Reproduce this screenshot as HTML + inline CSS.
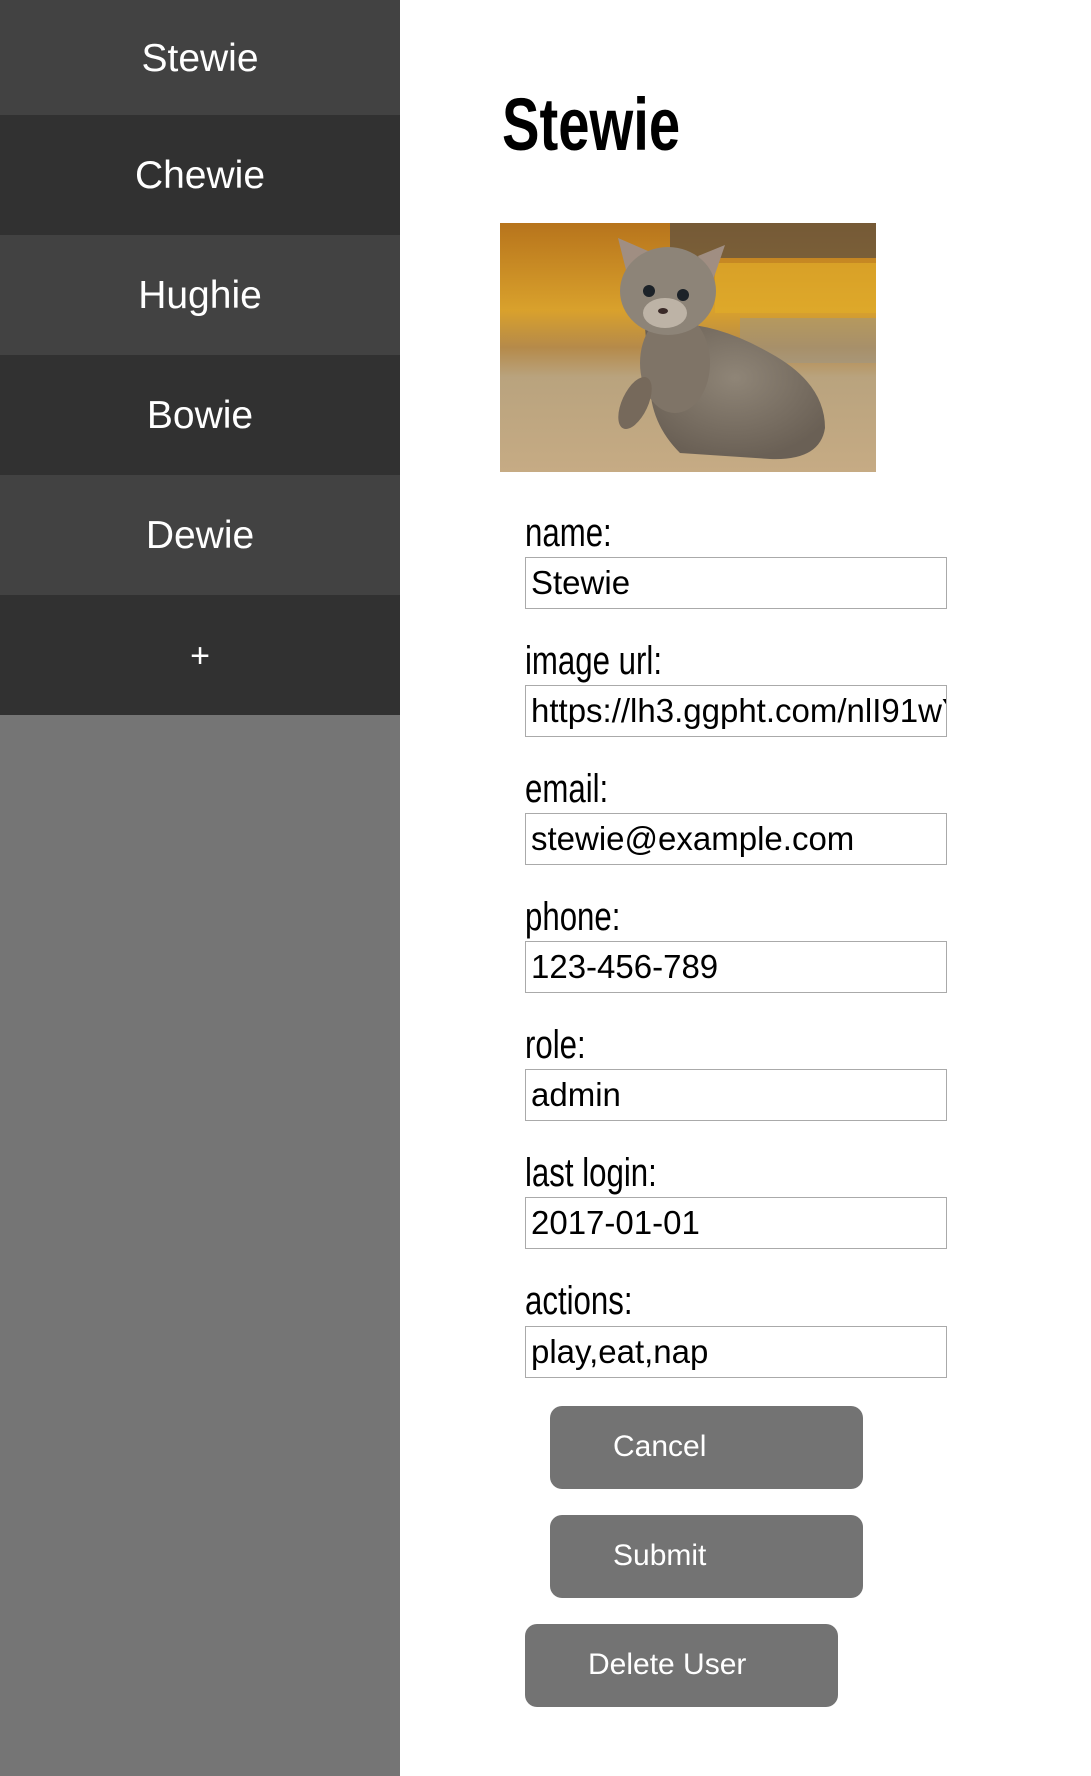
<!DOCTYPE html>
<html><head><meta charset="utf-8"><style>
html,body{margin:0;padding:0;width:1091px;height:1776px;overflow:hidden;background:#fff;font-family:"Liberation Sans",Arial,sans-serif}
#side{position:absolute;left:0;top:0;width:400px;height:1776px;background:#757575}
.it{position:absolute;left:0;width:400px;color:#fff;font-size:39px;text-align:center}
.it span{position:absolute;left:0;right:0}
h1{position:absolute;left:502px;top:0;margin:0;font-size:74px;font-weight:bold;line-height:1;transform:scaleX(.76);transform-origin:left top}
.lab{position:absolute;left:525px;font-size:40px;transform:scaleX(.78);transform-origin:left top;line-height:1;color:#000}
.inp{position:absolute;left:525px;width:420px;height:50px;border:1px solid #aaa;font-size:33px;overflow:hidden;white-space:nowrap}
.inp span{position:absolute;left:5px;top:8px;line-height:1}
.btn{position:absolute;width:313px;height:83px;background:#737373;border-radius:12px;color:#fff;font-size:30px}
.btn span{position:absolute;top:26px;line-height:1}
</style></head><body>
<div id="side">
<div class="it" style="top:0;height:115px;background:#424242"><span style="top:37px">Stewie</span></div>
<div class="it" style="top:115px;height:120px;background:#313131"><span style="top:39px">Chewie</span></div>
<div class="it" style="top:235px;height:120px;background:#424242"><span style="top:39px">Hughie</span></div>
<div class="it" style="top:355px;height:120px;background:#313131"><span style="top:39px">Bowie</span></div>
<div class="it" style="top:475px;height:120px;background:#424242"><span style="top:39px">Dewie</span></div>
<div class="it" style="top:595px;height:120px;background:#313131"><span style="top:42px;font-size:34px">+</span></div>
</div>
<h1 style="top:88px">Stewie</h1>
<svg style="position:absolute;left:500px;top:223px" width="376" height="249" viewBox="0 0 376 249">
<defs>
<linearGradient id="bg" x1="0" y1="0" x2="0" y2="1">
<stop offset="0" stop-color="#b7741c"/><stop offset=".35" stop-color="#d9a12c"/><stop offset=".5" stop-color="#b58a4a"/><stop offset=".62" stop-color="#b9a37e"/><stop offset="1" stop-color="#c6ab84"/></linearGradient>
<radialGradient id="fur" cx=".5" cy=".4" r=".6"><stop offset="0" stop-color="#8f8577"/><stop offset="1" stop-color="#6a6055"/></radialGradient>
</defs>
<rect width="376" height="249" fill="url(#bg)"/>
<rect x="170" y="0" width="206" height="35" fill="#5a4f42" opacity=".7"/>
<rect x="215" y="40" width="161" height="50" fill="#e0ab2a" opacity=".7"/>
<rect x="240" y="95" width="136" height="45" fill="#9a968a" opacity=".5"/>
<path d="M145 105 Q200 90 270 130 Q325 160 325 205 Q320 238 270 236 L180 230 Q150 200 150 160 Z" fill="url(#fur)"/>
<ellipse cx="175" cy="140" rx="35" ry="50" fill="#7f7467"/>
<ellipse cx="135" cy="180" rx="13" ry="28" fill="#76695b" transform="rotate(25 135 180)"/>
<polygon points="118,15 148,28 128,55" fill="#a08e82"/>
<polygon points="225,22 198,33 212,60" fill="#a08e82"/>
<ellipse cx="168" cy="68" rx="48" ry="44" fill="#8d8478"/>
<ellipse cx="165" cy="90" rx="22" ry="15" fill="#bdb3a6"/>
<circle cx="149" cy="68" r="6" fill="#1c2228"/><circle cx="183" cy="72" r="6" fill="#1c2228"/>
<ellipse cx="163" cy="88" rx="5" ry="3" fill="#3a2a28"/>
</svg>
<div class="lab" style="top:513px">name:</div>
<div class="inp" style="top:557px"><span>Stewie</span></div>
<div class="lab" style="top:641px">image url:</div>
<div class="inp" style="top:685px"><span>https://lh3.ggpht.com/nlI91wYE</span></div>
<div class="lab" style="top:769px">email:</div>
<div class="inp" style="top:813px"><span>stewie@example.com</span></div>
<div class="lab" style="top:897px">phone:</div>
<div class="inp" style="top:941px"><span>123-456-789</span></div>
<div class="lab" style="top:1025px">role:</div>
<div class="inp" style="top:1069px"><span>admin</span></div>
<div class="lab" style="top:1153px">last login:</div>
<div class="inp" style="top:1197px"><span>2017-01-01</span></div>
<div class="lab" style="top:1281px">actions:</div>
<div class="inp" style="top:1326px"><span>play,eat,nap</span></div>
<div class="btn" style="left:550px;top:1406px"><span style="left:63px">Cancel</span></div>
<div class="btn" style="left:550px;top:1515px"><span style="left:63px">Submit</span></div>
<div class="btn" style="left:525px;top:1624px"><span style="left:63px">Delete User</span></div>
</body></html>
